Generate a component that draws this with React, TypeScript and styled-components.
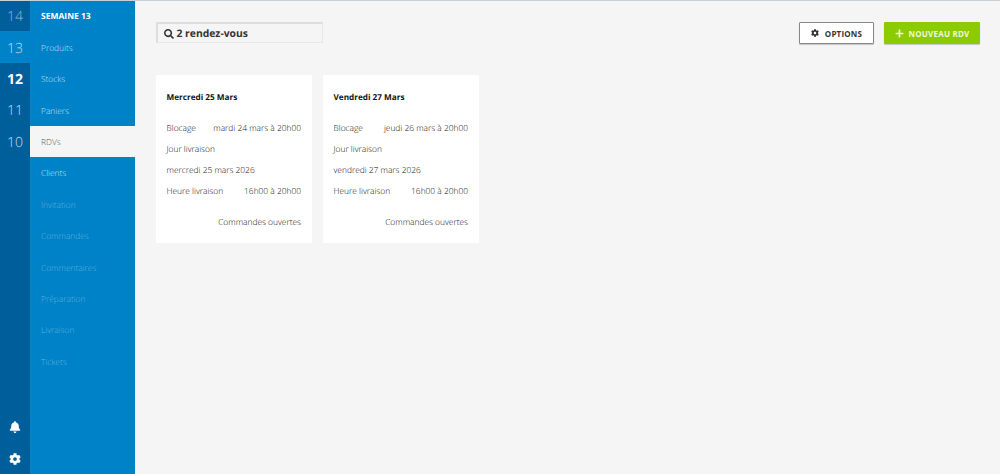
import React from 'react';
import styled, { createGlobalStyle } from 'styled-components';
import { FaBell, FaCog, FaPlus, FaSearch } from 'react-icons/fa';

const GlobalStyle = createGlobalStyle`
  html, body, #root {
    margin: 0;
    height: 100%;
  }
  body {
    background: #f5f5f5;
    font-family: "Open Sans", "Liberation Sans", sans-serif;
    text-rendering: geometricPrecision;
    overflow: hidden;
  }
`;

const Page = styled.div`
  position: relative;
  display: flex;
  height: 474px;
  &::before {
    content: '';
    position: absolute;
    top: 0;
    left: 0;
    right: 0;
    height: 1px;
    background: #c6d0d6;
  }
`;

const Weeks = styled.div`
  width: 30px;
  background: #005f9b;
  display: flex;
  flex-direction: column;
`;

const Week = styled.div<{ $current?: boolean; $selected?: boolean; $past?: boolean }>`
  height: 31.4px;
  box-sizing: border-box;
  padding-top: 2px;
  display: flex;
  align-items: center;
  justify-content: center;
  font-size: 14px;
  font-weight: ${(p) => (p.$selected ? 700 : 300)};
  color: ${(p) => (p.$selected ? '#fff' : p.$past ? '#8fb8d2' : '#c4deee')};
  background: ${(p) => (p.$current ? '#0082c8' : 'transparent')};
`;

const WeekIcons = styled.div`
  margin-top: auto;
  display: flex;
  flex-direction: column;
  align-items: center;
  gap: 20px;
  padding-bottom: 9px;
  color: #fff;
  font-size: 12px;
  svg {
    display: block;
  }
`;

const Menu = styled.nav`
  width: 105px;
  background: #0082c8;
  display: flex;
  flex-direction: column;
`;

const MenuTitle = styled.div`
  height: 31.4px;
  box-sizing: border-box;
  padding: 1px 0 0 11px;
  display: flex;
  align-items: center;
  color: #fff;
  font-size: 8.5px;
  font-weight: 700;
`;

const MenuItem = styled.div<{ $active?: boolean; $disabled?: boolean }>`
  height: 31.4px;
  box-sizing: border-box;
  padding: 2.6px 0 0 11px;
  display: flex;
  align-items: center;
  font-size: 8.4px;
  font-weight: 300;
  color: ${(p) => (p.$active ? '#3d5f78' : p.$disabled ? '#5fb0de' : '#c4e0f2')};
  background: ${(p) => (p.$active ? '#f5f5f5' : 'transparent')};
`;

const Main = styled.main`
  flex: 1;
  padding: 22px 20px 0 21px;
`;

const TopBar = styled.div`
  display: flex;
  align-items: flex-start;
  justify-content: space-between;
`;

const Search = styled.div`
  width: 167px;
  height: 21px;
  box-sizing: border-box;
  padding: 1px 0 0 5.5px;
  display: flex;
  align-items: center;
  gap: 3px;
  background: #f5f5f5;
  border: 1px solid #e8e8e8;
  border-top: 2px solid #dedede;
  border-left: 2px solid #dedede;
  font-size: 10.35px;
  font-weight: 700;
  color: #333;
  svg {
    font-size: 10px;
  }
`;

const Actions = styled.div`
  display: flex;
  gap: 10px;
`;

const ActionButton = styled.button<{ $primary?: boolean }>`
  height: 22px;
  box-sizing: border-box;
  padding: 0;
  display: flex;
  align-items: center;
  justify-content: center;
  gap: ${(p) => (p.$primary ? '5px' : '6px')};
  font-family: inherit;
  font-size: 8px;
  font-weight: 700;
  letter-spacing: 0.2px;
  width: ${(p) => (p.$primary ? '96px' : '75px')};
  color: ${(p) => (p.$primary ? '#eef8d8' : '#333')};
  background: ${(p) => (p.$primary ? '#8ccb00' : '#fff')};
  border: ${(p) => (p.$primary ? 'none' : '1px solid #888')};
  border-radius: 1px;
  box-shadow: 0 1px 1px rgba(0, 0, 0, 0.2);
  svg {
    font-size: ${(p) => (p.$primary ? '9px' : '8px')};
  }
`;

const Cards = styled.div`
  display: flex;
  gap: 11px;
  margin-top: 31px;
`;

const Card = styled.article`
  width: 156px;
  height: 168px;
  box-sizing: border-box;
  padding: 0 11px 0 10.5px;
  background: #fff;
  border-radius: 1px;
  color: #111;
  font-size: 8.4px;
  font-weight: 300;
`;

const CardTitle = styled.h3`
  margin: 0;
  padding: 17px 0 14px;
  line-height: 12px;
  font-size: 8.2px;
  font-weight: 700;
  color: #111;
`;

const Row = styled.div`
  height: 21px;
  display: flex;
  align-items: center;
  justify-content: space-between;
  white-space: nowrap;
`;

const Status = styled.div`
  margin-top: 10px;
  height: 21px;
  display: flex;
  align-items: center;
  justify-content: flex-end;
`;

const weeks = [14, 13, 12, 11, 10];
const items = ['Produits', 'Stocks', 'Paniers', 'RDVs', 'Clients'];
const disabledItems = ['Invitation', 'Commandes', 'Commentaires', 'Préparation', 'Livraison', 'Tickets'];

const rdvs = [
  { title: 'Mercredi 25 Mars', blocage: 'mardi 24 mars à 20h00', jour: 'mercredi 25 mars 2026' },
  { title: 'Vendredi 27 Mars', blocage: 'jeudi 26 mars à 20h00', jour: 'vendredi 27 mars 2026' },
];

export default function App() {
  return (
    <Page>
      <GlobalStyle />
      <Weeks>
        {weeks.map((w) => (
          <Week key={w} $current={w === 13} $selected={w === 12} $past={w === 14}>
            {w}
          </Week>
        ))}
        <WeekIcons>
          <FaBell />
          <FaCog />
        </WeekIcons>
      </Weeks>
      <Menu>
        <MenuTitle>SEMAINE 13</MenuTitle>
        {items.map((i) => (
          <MenuItem key={i} $active={i === 'RDVs'}>
            {i}
          </MenuItem>
        ))}
        {disabledItems.map((i) => (
          <MenuItem key={i} $disabled>
            {i}
          </MenuItem>
        ))}
      </Menu>
      <Main>
        <TopBar>
          <Search>
            <FaSearch />
            2 rendez-vous
          </Search>
          <Actions>
            <ActionButton>
              <FaCog />
              OPTIONS
            </ActionButton>
            <ActionButton $primary>
              <FaPlus />
              NOUVEAU RDV
            </ActionButton>
          </Actions>
        </TopBar>
        <Cards>
          {rdvs.map((r) => (
            <Card key={r.title}>
              <CardTitle>{r.title}</CardTitle>
              <Row>
                <span>Blocage</span>
                <span>{r.blocage}</span>
              </Row>
              <Row>Jour livraison</Row>
              <Row>{r.jour}</Row>
              <Row>
                <span>Heure livraison</span>
                <span>16h00 à 20h00</span>
              </Row>
              <Status>Commandes ouvertes</Status>
            </Card>
          ))}
        </Cards>
      </Main>
    </Page>
  );
}
